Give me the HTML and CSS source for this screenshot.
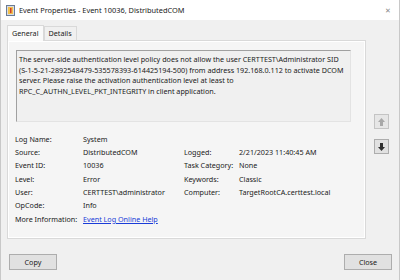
FILE: index.html
```html
<!DOCTYPE html>
<html>
    <head>
        <meta charset="utf-8">
        <title>Event Properties</title>
        <link rel="stylesheet" href="styles.css">
    </head>
    <body>
    <div class="window">
        <div class="titlebar">
            <svg class="app-icon" width="9" height="11" viewBox="0 0 9 11">
                <rect x="0.5" y="0.5" width="8" height="10" fill="#d8dce4" stroke="#6b7b93"/>
                <rect x="2" y="2" width="5" height="7" fill="#f3c04a"/>
                <rect x="4" y="3" width="1.5" height="5" fill="#d0402c"/>
            </svg>
            <span class="title">Event Properties - Event 10036, DistributedCOM</span>
            <span class="close-x">&#x2715;</span>
        </div>

        <div class="content">
            <div class="main">
                <div class="tab-area">
                    <div class="tabs">
                        <div class="tab active">General</div>
                        <div class="tab">Details</div>
                    </div>
                    <div class="panel">
                        <div class="message">The server-side authentication level policy does not allow the user CERTTEST\Administrator SID (S-1-5-21-2892548479-535578393-614425194-500) from address 192.168.0.112 to activate DCOM server. Please raise the activation authentication level at least to RPC_C_AUTHN_LEVEL_PKT_INTEGRITY in client application.</div>

                        <div class="fields">
                            <span class="label">Log Name:</span><span>System</span><span></span><span></span>
                            <span class="label">Source:</span><span>DistributedCOM</span><span class="label">Logged:</span><span>2/21/2023 11:40:45 AM</span>
                            <span class="label">Event ID:</span><span>10036</span><span class="label">Task Category:</span><span>None</span>
                            <span class="label">Level:</span><span>Error</span><span class="label">Keywords:</span><span>Classic</span>
                            <span class="label">User:</span><span>CERTTEST\administrator</span><span class="label">Computer:</span><span>TargetRootCA.certtest.local</span>
                            <span class="label">OpCode:</span><span>Info</span><span></span><span></span>
                            <span class="label">More Information:</span><a href="#" class="link">Event Log Online Help</a><span></span><span></span>
                        </div>
                    </div>
                </div>

                <div class="side">
                    <div class="arrow-btn disabled">
                        <svg width="7" height="8" viewBox="0 0 7 8"><polygon points="3.5,0 7,4 5,4 5,8 2,8 2,4 0,4" fill="#a8a8a8"/></svg>
                    </div>
                    <div class="arrow-btn">
                        <svg width="7" height="8" viewBox="0 0 7 8"><polygon points="2,0 5,0 5,4 7,4 3.5,8 0,4 2,4" fill="#303030"/></svg>
                    </div>
                </div>
            </div>

            <div class="footer">
                <button class="btn">Copy</button>
                <button class="btn">Close</button>
            </div>
        </div>
    </div>
    </body>
</html>
```

FILE: styles.css
```css
body, html {
    margin: 0;
    padding: 0;
    width: 400px;
    height: 280px;
    overflow: hidden;
    font-family: "Noto Sans", "Open Sans", sans-serif;
    font-size: 7.2px;
    color: #1a1a1a;
}
.window {
    height: 280px;
    display: flex;
    flex-direction: column;
    background: #f0f0f0;
    border-left: solid 1px #c8c8c8;
    border-right: solid 1px #c8c8c8;
    box-sizing: border-box;
}
.titlebar {
    height: 20px;
    background: #fff;
    display: flex;
    align-items: center;
    padding-left: 5px;
    padding-right: 8px;
}
.app-icon {
    margin-right: 4px;
}
.title {
    flex: 1;
    font-size: 7.4px;
}
.close-x {
    color: #888;
    font-size: 7px;
}
.content {
    flex: 1;
    display: flex;
    flex-direction: column;
    padding: 5px 7px 0 6px;
}
.main {
    display: flex;
}
.tab-area {
    width: 359px;
}
.tabs {
    display: flex;
    height: 15px;
    align-items: flex-end;
}
.tab {
    padding: 2px 4px 2px 4px;
    border: solid 1px #d9d9d9;
    border-bottom: none;
    background: #f0f0f0;
    margin-left: 0;
    height: 9px;
    line-height: 9px;
}
.tab.active {
    background: #fafafa;
    height: 11px;
    line-height: 11px;
    border-color: #d9d9d9;
    margin-bottom: -1px;
    position: relative;
    z-index: 1;
}
.panel {
    height: 199px;
    border: solid 1px #d9d9d9;
    background: #f5f5f5;
    box-shadow: inset 0 0 0 1px #fff;
    padding: 9px 14px 0 7px;
    box-sizing: border-box;
}
.message {
    height: 72px;
    margin-left: 1px;
    padding: 3px 3px 0 2px;
    border: solid 1px;
    border-color: #a0a0a0 #e3e3e3 #e3e3e3 #a0a0a0;
    background: #f0f0f0;
    line-height: 10.5px;
    box-sizing: border-box;
}
.fields {
    display: grid;
    grid-template-columns: 68px 101px 55px auto;
    grid-auto-rows: 13.35px;
    align-items: center;
    margin-top: 10px;
}
.link {
    color: #1a3cd8;
    white-space: nowrap;
}
.side {
    flex: 1;
    display: flex;
    flex-direction: column;
    align-items: center;
    padding-top: 89px;
    padding-left: 4px;
    gap: 10px;
}
.arrow-btn {
    width: 13px;
    height: 13px;
    border: solid 1px #adadad;
    background: #e1e1e1;
    display: flex;
    align-items: center;
    justify-content: center;
}
.arrow-btn.disabled {
    border-color: #c4c4c4;
    background: #e6e6e6;
}
.footer {
    display: flex;
    justify-content: space-between;
    margin-top: 15px;
    padding-left: 2px;
    padding-right: 0;
}
.btn {
    width: 48px;
    height: 16px;
    padding: 0;
    border: solid 1px #adadad;
    background: #e1e1e1;
    font-family: "Noto Sans", "Open Sans", sans-serif;
    font-size: 7.2px;
    color: #1a1a1a;
}
```
